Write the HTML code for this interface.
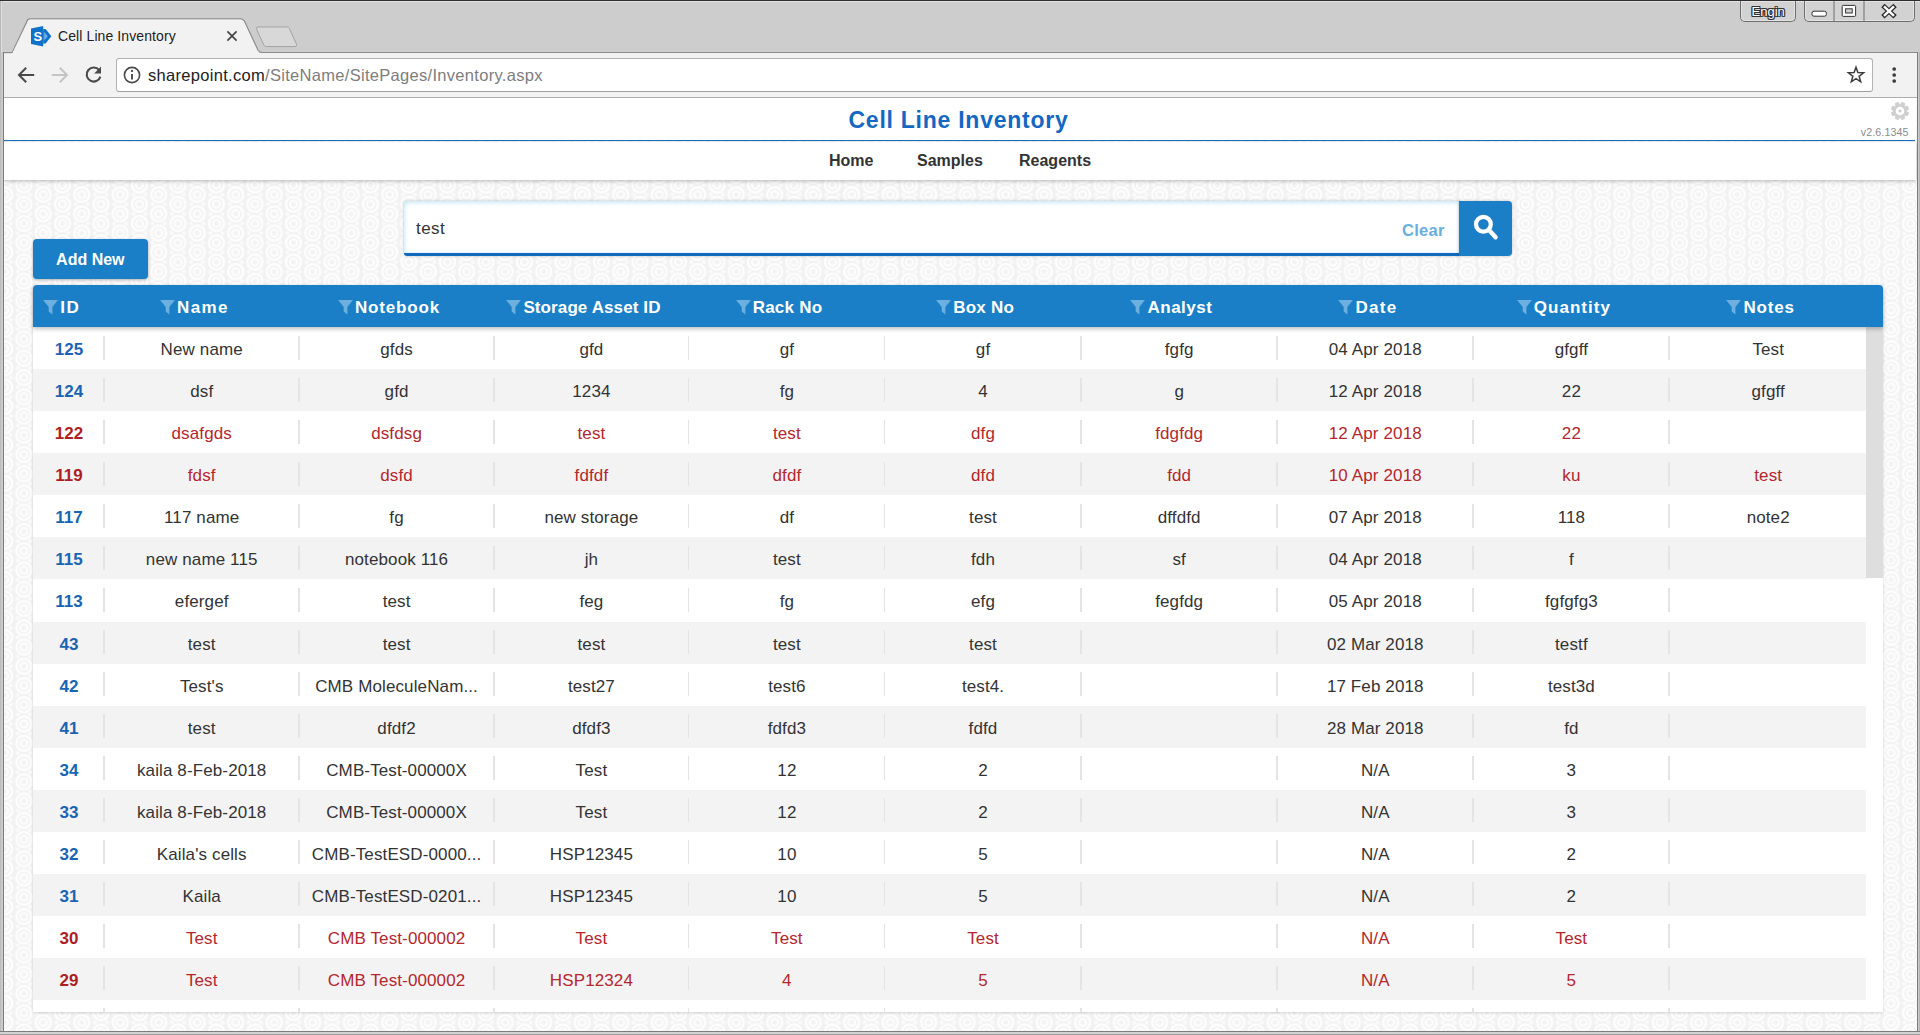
<!DOCTYPE html>
<html lang="en">
<head>
<meta charset="utf-8">
<title>Cell Line Inventory</title>
<style>
*{box-sizing:border-box;margin:0;padding:0}
html,body{width:1920px;height:1035px;overflow:hidden}
body{position:relative;background:#cdcdcd;font-family:"Liberation Sans","DejaVu Sans",sans-serif;color:#333}
.abs{position:absolute}
/* ---------- window chrome ---------- */
#frameTop{left:0;top:0;width:1920px;height:3px;background:linear-gradient(180deg,#2e2e2e 0,#2e2e2e 1px,#e2e2e2 1px,#e2e2e2 2px,#d2d2d2 2px,#cdcdcd 3px)}
#frameL{left:0;top:52px;width:4px;height:983px;background:linear-gradient(90deg,#bcbcbc 0,#bcbcbc 1px,#cacaca 1px,#cacaca 3px,#7c7c7c 3px,#7c7c7c 4px)}
#frameL2{left:0;top:1px;width:3px;height:51px;background:linear-gradient(90deg,#b8b8b8 0,#b8b8b8 1px,#dedede 1px,#dedede 2px,#cdcdcd 2px)}
#frameR{left:1917px;top:52px;width:3px;height:983px;background:linear-gradient(90deg,#7c7c7c 0,#7c7c7c 1px,#cacaca 1px,#cacaca 2px,#b4b4b4 2px)}
#frameB{left:0;top:1031px;width:1920px;height:4px;background:linear-gradient(180deg,#7c7c7c 0,#7c7c7c 1px,#d2d2d2 1px,#d2d2d2 2.5px,#9c9c9c 3px,#9c9c9c 4px)}
#titlebar{left:0;top:0;width:1920px;height:52px;background:#cdcdcd}
#tabsvg{left:0;top:0}
#tabtitle{left:58px;top:28px;font-size:14px;color:#222;white-space:nowrap;letter-spacing:.1px}
#toolbar{left:4px;top:52px;width:1913px;height:46px;background:#f2f2f2;border-bottom:1px solid #adadad;border-top:1px solid #8c8c8c}
#urlbox{left:116px;top:58px;width:1757px;height:33.5px;background:#fff;border:1px solid #b3b3b3;border-bottom-color:#a0a0a0;border-radius:3px}
#url{left:148px;top:65.6px;font-size:16.5px;color:#222;white-space:nowrap;letter-spacing:.3px}
#url span{color:#7d7d7d}
.wbtn{top:1px;height:21px;border:1px solid #6e6e6e;border-top:none;border-radius:0 0 5px 5px;background:#d2d2d2;box-shadow:inset 0 0 0 1px #e3e3e3}
#engin{left:1740px;width:56px}
#engin span{position:absolute;left:10.5px;top:3px;font-size:13px;color:#fff;letter-spacing:0;text-shadow:-1px 0 #333,1px 0 #333,0 -1px #333,0 1px #333,1px 1px #333,-1px -1px #333,1px -1px #333,-1px 1px #333}
#ctrls{left:1804px;width:111px}
/* ---------- page ---------- */
#page{left:4px;top:98px;width:1913px;height:933px;overflow:hidden;
 background-color:#f2f2f2;
 background-image:
  radial-gradient(circle at 50% 50%, #f3f3f3 0, #f3f3f3 1.9px, #fdfdfd 2.9px, #fdfdfd 4.2px, #f2f2f2 5px, #f2f2f2 5.7px, #fdfdfd 6.5px, #fdfdfd 8.2px, rgba(242,242,242,0) 9.2px),
  radial-gradient(circle at 50% 50%, #f3f3f3 0, #f3f3f3 1.9px, #fdfdfd 2.9px, #fdfdfd 4.2px, #f2f2f2 5px, #f2f2f2 5.7px, #fdfdfd 6.5px, #fdfdfd 8.2px, rgba(242,242,242,0) 9.2px),
  radial-gradient(circle at 50% 50%, #fbfbfb 0, #fbfbfb 1.2px, rgba(251,251,251,0) 2.6px),
  radial-gradient(circle at 50% 50%, #fbfbfb 0, #fbfbfb 1.2px, rgba(251,251,251,0) 2.6px),
  radial-gradient(circle at 50% 50%, #fbfbfb 0, #fbfbfb 1.2px, rgba(251,251,251,0) 2.6px),
  radial-gradient(circle at 50% 50%, #fbfbfb 0, #fbfbfb 1.2px, rgba(251,251,251,0) 2.6px);
 background-size:38.5px 19.25px,38.5px 19.25px,38.5px 19.25px,38.5px 19.25px,38.5px 19.25px,38.5px 19.25px;
 background-position:19.94px 10.03px,0.69px 0.41px,33.04px 10.03px,6.84px 10.03px,13.79px 0.41px,26.09px 0.41px}
#hdr{left:0;top:0;width:1912px;height:42px;background:#fff}
#title{left:0;top:9px;width:1909px;text-align:center;font-size:23px;font-weight:bold;color:#1468c4;white-space:nowrap;letter-spacing:.75px}
#blueline{left:0;top:41.7px;width:1911px;height:1.6px;background:#1673c8}
#nav{left:0;top:44px;width:1912px;height:38px;background:#fff;box-shadow:0 1px 4px rgba(0,0,0,.28)}
.navi{top:10px;font-size:16px;font-weight:bold;color:#333;white-space:nowrap}
#gear{left:1886.1px;top:2.7px}
#ver{left:1836px;top:28.3px;width:68.6px;text-align:right;font-size:10.7px;color:#8c8c8c;letter-spacing:.1px}
#search{left:400px;top:103px;width:1056px;height:55px;background:#fff;border-bottom:3px solid #0f6abf;border-radius:3px 0 0 3px;box-shadow:0 0 3px rgba(0,0,0,.25),inset 0 1px 5px rgba(120,200,235,.55)}
#stext{left:412px;top:121px;font-size:17px;color:#333;letter-spacing:.45px}
#clear{left:1398px;top:122.5px;font-size:16.5px;font-weight:bold;color:#6aaee0;letter-spacing:.3px}
#sbtn{left:1455px;top:103px;width:53px;height:55px;background:#1a7fc6;border-radius:0 4px 4px 0;box-shadow:0 0 3px rgba(0,0,0,.25)}
#addnew{left:28.7px;top:141.3px;width:115.3px;height:39.4px;background:#1a7fc6;border-radius:4px;color:#fff;font-weight:bold;font-size:16px;text-align:center;line-height:42px;box-shadow:0 1px 3px rgba(0,0,0,.3)}
/* ---------- table ---------- */
#tbl{left:28.8px;top:187.2px;width:1850px;height:726.5px;background:#fff;border-radius:4px 4px 0 0;box-shadow:0 1px 3px rgba(0,0,0,.16)}
#thead{left:0;top:0;width:1850px;height:42px;background:#1a7fc6;border-radius:4px 4px 0 0;box-shadow:0 2px 4px rgba(0,0,0,.25);z-index:3}
.th{position:absolute;top:0;height:42px;line-height:46px;text-align:center;color:#fff;font-weight:bold;font-size:17px;white-space:nowrap;padding-left:3px}
.th span{position:relative;display:inline-block}
.th svg{position:absolute;right:100%;top:14.8px;margin-right:2px}
#rows{left:0;top:42px;width:1833.2px;height:685px;overflow:hidden}
.r{position:relative;height:42.06px;width:1833.2px;white-space:nowrap}
.r:nth-child(even){background:#f3f3f3}
.c{position:absolute;top:0;height:42px;line-height:45.4px;text-align:center;font-size:17px;letter-spacing:.12px;overflow:hidden;padding-left:2px}
.c+.c:before{content:"";position:absolute;left:0;top:8.5px;width:1.5px;height:24px;background:#e4e4e4}
.c0{left:0;width:70.51px;font-weight:bold;color:#1a64b4;font-size:17px;letter-spacing:.1px}
.c1{left:70.51px;width:194.84px}.c2{left:265.35px;width:194.86px}.c3{left:460.21px;width:194.84px}.c4{left:655.05px;width:196.10px}.c5{left:851.15px;width:196.20px}.c6{left:1047.35px;width:196.10px}.c7{left:1243.45px;width:196.10px}.c8{left:1439.55px;width:196.10px}.c9{left:1635.65px;width:197.55px}
.red .c{color:#b3272d}
.red .c0{color:#ad1e23}
#sbthumb{left:1833.2px;top:42px;width:17px;height:251px;background:#dedede}
</style>
</head>
<body>
<div class="abs" id="titlebar"></div>
<div class="abs" id="frameTop"></div>
<div class="abs" id="frameL2"></div>
<div class="abs" id="toolbar"></div>
<svg class="abs" id="tabsvg" width="320" height="56" viewBox="0 0 320 56">
<path d="M12 53 L27 21.2 Q27.6 18.9 30.2 18.9 L240.5 18.9 Q243.2 18.9 244.5 21.2 L258 50.3 Q259.6 52.6 262.5 52.6 L264 52.6" fill="none" stroke="#8c8c8c" stroke-width="1.2"/>
<path d="M4 53.2 L12.3 53.2 L27.7 21.8 Q28 19.6 30.4 19.6 L240.3 19.6 Q242.8 19.6 243.9 21.8 L257.4 50.6 Q258.9 53.2 262 53.2 L320 53.2 L320 56 L4 56 Z" fill="#f2f2f2"/>
<path d="M4 52.6 L12 52.6" stroke="#8c8c8c" stroke-width="1.2"/>
<path d="M258.3 27 L286.8 27 Q288.6 27 289.4 28.6 L296.6 44.4 Q297.4 46.6 295 46.6 L266.5 46.6 Q264.6 46.6 263.8 45 L256.6 29.2 Q255.8 27 258.3 27 Z" fill="#d8d8d8" stroke="#a3a3a3" stroke-width="1"/>
<path d="M227.4 31.4 L236.6 40.6 M236.6 31.4 L227.4 40.6" stroke="#454545" stroke-width="1.7" fill="none"/>
<!-- favicon -->
<path d="M31 28.4 L43.2 26 L43.2 46.4 L31 44 Z" fill="#0f72c8"/>
<path d="M43.2 29 L45.6 29 L51.4 36.2 L45.6 43.4 L43.2 43.4 Z" fill="#0f72c8"/>
<path d="M44.2 32 L47.8 36.2 L44.2 40.4 Z" fill="#6fb0e6"/>
<text x="33.6" y="40.8" font-family="Liberation Sans, sans-serif" font-weight="bold" font-size="13" fill="#ffffff">S</text>
</svg>

<div class="abs" id="tabtitle">Cell Line Inventory</div>
<div class="abs" id="urlbox"></div>
<div class="abs" id="url">sharepoint.com<span>/SiteName/SitePages/Inventory.aspx</span></div>
<div class="abs wbtn" id="engin"><span>Engin</span></div>
<div class="abs wbtn" id="ctrls"></div>
<svg class="abs" style="left:0;top:56px" width="160" height="40" viewBox="0 56 160 40">
<path d="M34.2 75 L19.4 75 M26.2 67.8 L19 75 L26.2 82.2" fill="none" stroke="#4a4a4a" stroke-width="2"/>
<path d="M51.8 75 L66.6 75 M59.8 67.8 L67 75 L59.8 82.2" fill="none" stroke="#c4c4c4" stroke-width="2"/>
<path d="M99.2 70.2 A7 7 0 1 0 100.4 76.6" fill="none" stroke="#4a4a4a" stroke-width="2.1"/>
<path d="M101 66.6 L101 73.4 L94.2 73.4 Z" fill="#4a4a4a"/>
<circle cx="132" cy="75" r="7.6" fill="none" stroke="#4a4a4a" stroke-width="1.6"/>
<path d="M132 74 L132 79.4" stroke="#4a4a4a" stroke-width="1.9"/>
<circle cx="132" cy="71" r="1.15" fill="#4a4a4a"/>
</svg>
<svg class="abs" style="left:1800px;top:0" width="120" height="96" viewBox="1800 0 120 96">
<path d="M1856.0 67.3 L1857.9 72.6 L1863.6 72.8 L1859.1 76.3 L1860.7 81.8 L1856.0 78.6 L1851.3 81.8 L1852.9 76.3 L1848.4 72.8 L1854.1 72.6 Z" fill="none" stroke="#3c3c3c" stroke-width="1.5" stroke-linejoin="miter"/>
<circle cx="1894.2" cy="69" r="1.85" fill="#3c3c3c"/><circle cx="1894.2" cy="75" r="1.85" fill="#3c3c3c"/><circle cx="1894.2" cy="81" r="1.85" fill="#3c3c3c"/>
<path d="M1834 1 L1834 21 M1864 1 L1864 21" stroke="#6e6e6e" stroke-width="1"/>
<rect x="1812" y="11.2" width="14.4" height="5" rx="2" fill="#fff" stroke="#333" stroke-width="1"/>
<rect x="1842.2" y="5.4" width="13.4" height="11" rx="1" fill="#fff" stroke="#333" stroke-width="1"/>
<rect x="1845.6" y="8.8" width="6.6" height="4.2" fill="#d2d2d2" stroke="#333" stroke-width="1"/>
<path d="M1882.9 5.4 L1895.1 16.8 M1895.1 5.4 L1882.9 16.8" stroke="#2a2a2a" stroke-width="4.8" fill="none"/>
<path d="M1884 6.4 L1894 15.8 M1894 6.4 L1884 15.8" stroke="#fff" stroke-width="2.4" fill="none"/>
</svg>

<div class="abs" id="page">
  <div class="abs" id="hdr"></div>
  <div class="abs" id="title">Cell Line Inventory</div>
  <div class="abs" id="blueline"></div>
  <div class="abs" id="nav">
    <div class="abs navi" style="left:825px">Home</div>
    <div class="abs navi" style="left:913px">Samples</div>
    <div class="abs navi" style="left:1015px">Reagents</div>
  </div>
  <svg class="abs" id="gear" width="20" height="20" viewBox="-10 -10 20 20"><path d="M0.61 -6.57 L1.70 -8.74 L4.97 -7.38 L4.21 -5.08 L5.08 -4.21 L7.38 -4.97 L8.74 -1.70 L6.57 -0.61 L6.57 0.61 L8.74 1.70 L7.38 4.97 L5.08 4.21 L4.21 5.08 L4.97 7.38 L1.70 8.74 L0.61 6.57 L-0.61 6.57 L-1.70 8.74 L-4.97 7.38 L-4.21 5.08 L-5.08 4.21 L-7.38 4.97 L-8.74 1.70 L-6.57 0.61 L-6.57 -0.61 L-8.74 -1.70 L-7.38 -4.97 L-5.08 -4.21 L-4.21 -5.08 L-4.97 -7.38 L-1.70 -8.74 L-0.61 -6.57 Z" fill="#cfcfcf" stroke="#cfcfcf" stroke-width="0.8" stroke-linejoin="round"/><circle r="4.3" fill="#fff"/><circle r="1.6" fill="#cfcfcf"/></svg>
  <div class="abs" id="ver">v2.6.1345</div>
  <div class="abs" id="search"></div>
  <div class="abs" id="stext">test</div>
  <div class="abs" id="clear">Clear</div>
  <div class="abs" id="sbtn"><svg class="abs" style="left:0;top:0" width="53" height="55" viewBox="0 0 53 55"><circle cx="24.4" cy="23.2" r="7.4" fill="none" stroke="#fff" stroke-width="4.2"/><path d="M30 29 L36.6 36.3" stroke="#fff" stroke-width="4.3" stroke-linecap="round"/></svg>
</div>
  <div class="abs" id="addnew">Add New</div>
  <div class="abs" id="tbl">
    <div class="abs" id="thead"><div class="th" style="left:0.00px;width:70.51px"><span style="letter-spacing:1.50px;margin-left:1.50px"><svg width="15" height="15" viewBox="0 0 15 15"><path d="M0.1 0H14.9L9.4 6.9V14.4L5.7 11.4V6.9Z" fill="#6db0e0"/></svg>ID</span></div>
<div class="th" style="left:70.51px;width:194.84px"><span style="letter-spacing:1.33px;margin-left:1.33px"><svg width="15" height="15" viewBox="0 0 15 15"><path d="M0.1 0H14.9L9.4 6.9V14.4L5.7 11.4V6.9Z" fill="#6db0e0"/></svg>Name</span></div>
<div class="th" style="left:265.35px;width:194.86px"><span style="letter-spacing:0.81px;margin-left:0.81px"><svg width="15" height="15" viewBox="0 0 15 15"><path d="M0.1 0H14.9L9.4 6.9V14.4L5.7 11.4V6.9Z" fill="#6db0e0"/></svg>Notebook</span></div>
<div class="th" style="left:460.21px;width:194.84px"><span style="letter-spacing:0.11px;margin-left:0.11px"><svg width="15" height="15" viewBox="0 0 15 15"><path d="M0.1 0H14.9L9.4 6.9V14.4L5.7 11.4V6.9Z" fill="#6db0e0"/></svg>Storage Asset ID</span></div>
<div class="th" style="left:655.05px;width:196.10px"><span style="letter-spacing:0.23px;margin-left:0.23px"><svg width="15" height="15" viewBox="0 0 15 15"><path d="M0.1 0H14.9L9.4 6.9V14.4L5.7 11.4V6.9Z" fill="#6db0e0"/></svg>Rack No</span></div>
<div class="th" style="left:851.15px;width:196.20px"><span style="letter-spacing:0.24px;margin-left:0.24px"><svg width="15" height="15" viewBox="0 0 15 15"><path d="M0.1 0H14.9L9.4 6.9V14.4L5.7 11.4V6.9Z" fill="#6db0e0"/></svg>Box No</span></div>
<div class="th" style="left:1047.35px;width:196.10px"><span style="letter-spacing:0.50px;margin-left:0.50px"><svg width="15" height="15" viewBox="0 0 15 15"><path d="M0.1 0H14.9L9.4 6.9V14.4L5.7 11.4V6.9Z" fill="#6db0e0"/></svg>Analyst</span></div>
<div class="th" style="left:1243.45px;width:196.10px"><span style="letter-spacing:1.30px;margin-left:1.30px"><svg width="15" height="15" viewBox="0 0 15 15"><path d="M0.1 0H14.9L9.4 6.9V14.4L5.7 11.4V6.9Z" fill="#6db0e0"/></svg>Date</span></div>
<div class="th" style="left:1439.55px;width:196.10px"><span style="letter-spacing:1.03px;margin-left:1.03px"><svg width="15" height="15" viewBox="0 0 15 15"><path d="M0.1 0H14.9L9.4 6.9V14.4L5.7 11.4V6.9Z" fill="#6db0e0"/></svg>Quantity</span></div>
<div class="th" style="left:1635.65px;width:197.55px"><span style="letter-spacing:0.82px;margin-left:0.82px"><svg width="15" height="15" viewBox="0 0 15 15"><path d="M0.1 0H14.9L9.4 6.9V14.4L5.7 11.4V6.9Z" fill="#6db0e0"/></svg>Notes</span></div></div>
    <div class="abs" id="rows"><div class="r"><div class="c c0">125</div><div class="c c1">New name</div><div class="c c2">gfds</div><div class="c c3">gfd</div><div class="c c4">gf</div><div class="c c5">gf</div><div class="c c6">fgfg</div><div class="c c7">04 Apr 2018</div><div class="c c8">gfgff</div><div class="c c9">Test</div></div>
<div class="r"><div class="c c0">124</div><div class="c c1">dsf</div><div class="c c2">gfd</div><div class="c c3">1234</div><div class="c c4">fg</div><div class="c c5">4</div><div class="c c6">g</div><div class="c c7">12 Apr 2018</div><div class="c c8">22</div><div class="c c9">gfgff</div></div>
<div class="r red"><div class="c c0">122</div><div class="c c1">dsafgds</div><div class="c c2">dsfdsg</div><div class="c c3">test</div><div class="c c4">test</div><div class="c c5">dfg</div><div class="c c6">fdgfdg</div><div class="c c7">12 Apr 2018</div><div class="c c8">22</div><div class="c c9"></div></div>
<div class="r red"><div class="c c0">119</div><div class="c c1">fdsf</div><div class="c c2">dsfd</div><div class="c c3">fdfdf</div><div class="c c4">dfdf</div><div class="c c5">dfd</div><div class="c c6">fdd</div><div class="c c7">10 Apr 2018</div><div class="c c8">ku</div><div class="c c9">test</div></div>
<div class="r"><div class="c c0">117</div><div class="c c1">117 name</div><div class="c c2">fg</div><div class="c c3">new storage</div><div class="c c4">df</div><div class="c c5">test</div><div class="c c6">dffdfd</div><div class="c c7">07 Apr 2018</div><div class="c c8">118</div><div class="c c9">note2</div></div>
<div class="r"><div class="c c0">115</div><div class="c c1">new name 115</div><div class="c c2">notebook 116</div><div class="c c3">jh</div><div class="c c4">test</div><div class="c c5">fdh</div><div class="c c6">sf</div><div class="c c7">04 Apr 2018</div><div class="c c8">f</div><div class="c c9"></div></div>
<div class="r"><div class="c c0">113</div><div class="c c1">efergef</div><div class="c c2">test</div><div class="c c3">feg</div><div class="c c4">fg</div><div class="c c5">efg</div><div class="c c6">fegfdg</div><div class="c c7">05 Apr 2018</div><div class="c c8">fgfgfg3</div><div class="c c9"></div></div>
<div class="r"><div class="c c0">43</div><div class="c c1">test</div><div class="c c2">test</div><div class="c c3">test</div><div class="c c4">test</div><div class="c c5">test</div><div class="c c6"></div><div class="c c7">02 Mar 2018</div><div class="c c8">testf</div><div class="c c9"></div></div>
<div class="r"><div class="c c0">42</div><div class="c c1">Test's</div><div class="c c2">CMB MoleculeNam...</div><div class="c c3">test27</div><div class="c c4">test6</div><div class="c c5">test4.</div><div class="c c6"></div><div class="c c7">17 Feb 2018</div><div class="c c8">test3d</div><div class="c c9"></div></div>
<div class="r"><div class="c c0">41</div><div class="c c1">test</div><div class="c c2">dfdf2</div><div class="c c3">dfdf3</div><div class="c c4">fdfd3</div><div class="c c5">fdfd</div><div class="c c6"></div><div class="c c7">28 Mar 2018</div><div class="c c8">fd</div><div class="c c9"></div></div>
<div class="r"><div class="c c0">34</div><div class="c c1">kaila 8-Feb-2018</div><div class="c c2">CMB-Test-00000X</div><div class="c c3">Test</div><div class="c c4">12</div><div class="c c5">2</div><div class="c c6"></div><div class="c c7">N/A</div><div class="c c8">3</div><div class="c c9"></div></div>
<div class="r"><div class="c c0">33</div><div class="c c1">kaila 8-Feb-2018</div><div class="c c2">CMB-Test-00000X</div><div class="c c3">Test</div><div class="c c4">12</div><div class="c c5">2</div><div class="c c6"></div><div class="c c7">N/A</div><div class="c c8">3</div><div class="c c9"></div></div>
<div class="r"><div class="c c0">32</div><div class="c c1">Kaila's cells</div><div class="c c2">CMB-TestESD-0000...</div><div class="c c3">HSP12345</div><div class="c c4">10</div><div class="c c5">5</div><div class="c c6"></div><div class="c c7">N/A</div><div class="c c8">2</div><div class="c c9"></div></div>
<div class="r"><div class="c c0">31</div><div class="c c1">Kaila</div><div class="c c2">CMB-TestESD-0201...</div><div class="c c3">HSP12345</div><div class="c c4">10</div><div class="c c5">5</div><div class="c c6"></div><div class="c c7">N/A</div><div class="c c8">2</div><div class="c c9"></div></div>
<div class="r red"><div class="c c0">30</div><div class="c c1">Test</div><div class="c c2">CMB Test-000002</div><div class="c c3">Test</div><div class="c c4">Test</div><div class="c c5">Test</div><div class="c c6"></div><div class="c c7">N/A</div><div class="c c8">Test</div><div class="c c9"></div></div>
<div class="r red"><div class="c c0">29</div><div class="c c1">Test</div><div class="c c2">CMB Test-000002</div><div class="c c3">HSP12324</div><div class="c c4">4</div><div class="c c5">5</div><div class="c c6"></div><div class="c c7">N/A</div><div class="c c8">5</div><div class="c c9"></div></div>
<div class="r"><div class="c c0"></div><div class="c c1"></div><div class="c c2"></div><div class="c c3"></div><div class="c c4"></div><div class="c c5"></div><div class="c c6"></div><div class="c c7"></div><div class="c c8"></div><div class="c c9"></div></div></div>
    <div class="abs" id="sbthumb"></div>
  </div>
</div>
<div class="abs" id="frameL"></div>
<div class="abs" id="frameR"></div>
<div class="abs" id="frameB"></div>
</body>
</html>
